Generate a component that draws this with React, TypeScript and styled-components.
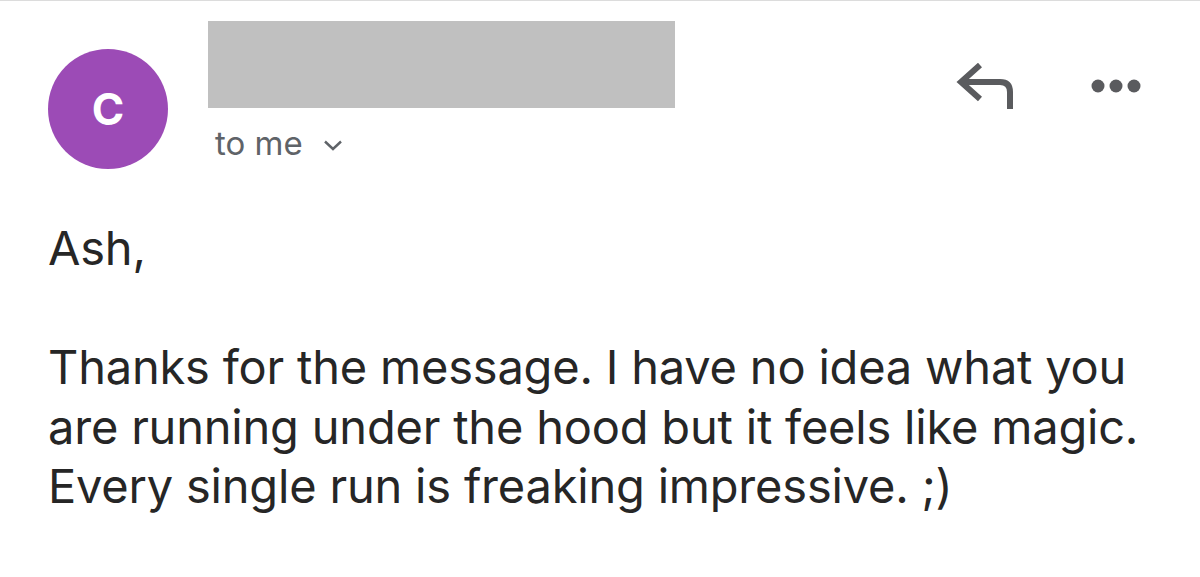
import React from "react";
import styled, { createGlobalStyle } from "styled-components";

const GlobalStyle = createGlobalStyle`
    html, body {
        margin: 0;
        padding: 0;
        background: #fff;
    }
    body {
        font-family: Inter, "Noto Sans", "Liberation Sans", sans-serif;
        -webkit-font-smoothing: antialiased;
    }
`;

const ReplyIcon = () => (
    <svg width="60" height="46" viewBox="0 0 60 46" fill="none">
        <path
            d="M25 2 L6 19 L25 36 M6 19 H45 Q55 19 55 29 V46"
            stroke="#5a5b5e"
            strokeWidth="6"
            strokeLinejoin="miter"
        />
    </svg>
);

const MoreIcon = () => (
    <svg width="50" height="14" viewBox="0 0 50 14">
        <circle cx="7" cy="7" r="6.5" fill="#5a5b5e" />
        <circle cx="25" cy="7" r="6.5" fill="#5a5b5e" />
        <circle cx="43" cy="7" r="6.5" fill="#5a5b5e" />
    </svg>
);

const Chevron = () => (
    <svg width="20" height="13" viewBox="0 0 20 13" fill="none">
        <path d="M2 2.5 L10 10 L18 2.5" stroke="#5f6368" strokeWidth="2.4" />
    </svg>
);

const App: React.FC = () => {
    return (
        <>
            <GlobalStyle />
            <Page>
                <Header>
                    <Avatar>C</Avatar>
                    <Sender>
                        <Redacted />
                        <Recipient>
                            to me
                            <Chevron />
                        </Recipient>
                    </Sender>
                    <Actions>
                        <IconButton>
                            <ReplyIcon />
                        </IconButton>
                        <IconButton>
                            <MoreIcon />
                        </IconButton>
                    </Actions>
                </Header>
                <Body>
                    <Paragraph>Ash,</Paragraph>
                    <Paragraph>
                        Thanks for the message. I have no idea what you
                        <br />
                        are running under the hood but it feels like magic.
                        <br />
                        Every single run is freaking impressive. ;)
                    </Paragraph>
                </Body>
            </Page>
        </>
    );
};

const Page = styled.div`
    width: 1200px;
    height: 577px;
    box-sizing: border-box;
    border-top: 1px solid #dcdcdc;
    overflow: hidden;
`;

const Header = styled.div`
    display: flex;
    align-items: flex-start;
    padding: 20px 0 0 48px;
`;

const Avatar = styled.div`
    display: flex;
    align-items: center;
    justify-content: center;
    width: 120px;
    height: 120px;
    margin-top: 28px;
    border-radius: 50%;
    background: #9c4bb6;
    color: #fff;
    font-size: 44px;
    font-weight: 700;
`;

const Sender = styled.div`
    display: flex;
    flex-direction: column;
    margin-left: 40px;
`;

const Redacted = styled.div`
    width: 467px;
    height: 87px;
    background: #c0c0c0;
`;

const Recipient = styled.div`
    display: flex;
    align-items: center;
    gap: 20px;
    margin: 15px 0 0 7px;
    font-size: 33px;
    line-height: 40px;
    color: #5f6368;

    svg {
        margin-top: 4px;
    }
`;

const Actions = styled.div`
    display: flex;
    align-items: center;
    gap: 76px;
    margin-left: auto;
    margin-top: 42px;
    padding-right: 59px;
`;

const IconButton = styled.div`
    display: flex;
    align-items: center;
    justify-content: center;
    cursor: pointer;
`;

const Body = styled.div`
    display: flex;
    flex-direction: column;
    padding: 49px 0 0 48px;
    color: #262626;
    font-size: 47px;
    line-height: 59.5px;
    letter-spacing: -0.2px;
`;

const Paragraph = styled.p`
    margin: 0 0 59.5px;
`;

export default App;
